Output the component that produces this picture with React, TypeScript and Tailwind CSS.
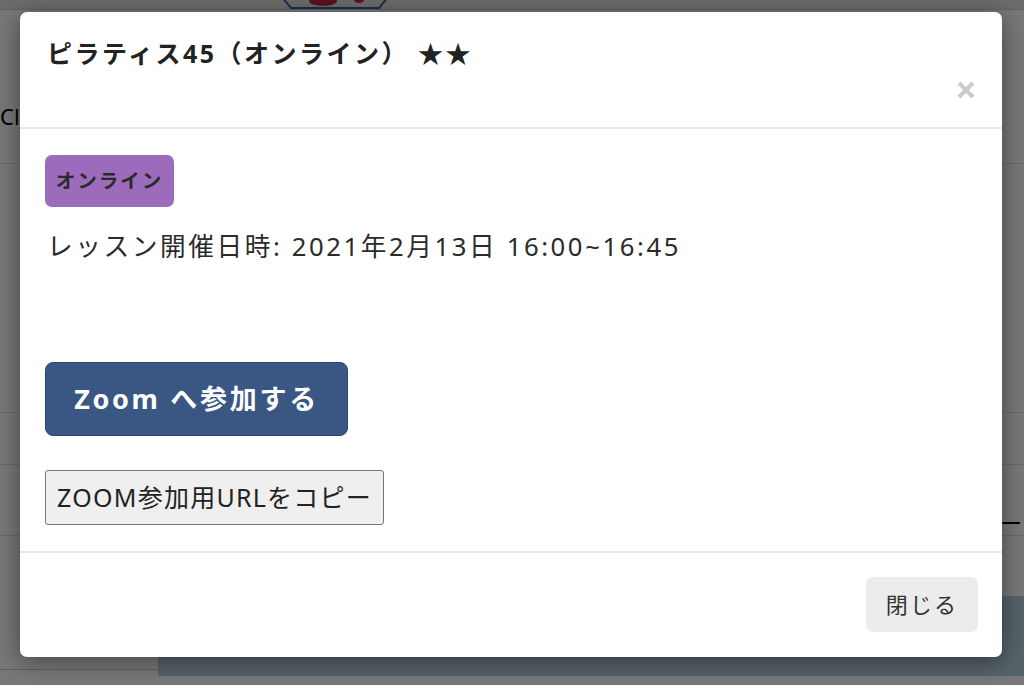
import React from "react";

function CloseIcon() {
    return (
        <svg width="20" height="20" viewBox="0 0 20 20" fill="none" stroke="currentColor" strokeWidth="4" strokeLinecap="butt">
            <path d="M3 3 L17 17 M17 3 L3 17" />
        </svg>
    );
}

/** Faint page that sits behind the dimmed overlay. */
function BackgroundPage() {
    return (
        <div className="h-full w-full bg-white flex flex-col">
            <div className="h-[10px] bg-[#e6e6e6] border-b border-[#d0d0d0] flex justify-center">
                <svg width="120" height="10" viewBox="0 0 120 10" className="ml-[-354px]">
                    <path d="M6 -4 L114 -4 L104 8 L16 8 Z" fill="none" stroke="#3b63b3" strokeWidth="2" />
                    <ellipse cx="48" cy="1" rx="14" ry="5" fill="#c0283c" />
                    <ellipse cx="84" cy="0" rx="5" ry="3" fill="#c0283c" />
                </svg>
            </div>
            <div className="h-[95px]" />
            <div className="text-[22px] leading-none text-black pl-0">Cl</div>
            <div className="mt-[36px] border-b border-[#e0e0e0]" />
            <div className="h-[248px]" />
            <div className="border-b border-[#e0e0e0]" />
            <div className="h-[51px]" />
            <div className="border-b border-[#e0e0e0]" />
            <div className="h-[70px] flex justify-end items-start">
                <span className="text-[22px] leading-[30px] text-black mt-[42px] mr-[2px]">ン ー</span>
            </div>
            <div className="border-b border-[#e0e0e0]" />
            <div className="h-[60px]" />
            <div className="flex h-[80px]">
                <div className="w-[158px] border-b border-[#c8c8c8] h-[74px]" />
                <div className="flex-1 bg-[#b8d3e0]" />
            </div>
        </div>
    );
}

export default function App() {
    return (
        <div className="relative w-[1024px] h-[685px] overflow-hidden font-['Noto_Sans','Noto_Sans_CJK_JP',sans-serif]">
            <BackgroundPage />
            <div className="absolute inset-0 bg-black/[0.53]" />
            <div className="absolute inset-0 pt-[12px] pl-[20px]">
                <div className="w-[982px] h-[645px] bg-white rounded-[7px] shadow-[0_4px_24px_rgba(0,0,0,0.45)] flex flex-col">
                    <div className="h-[117px] border-b-2 border-[#e6e6e6] flex justify-between pl-[27px] pr-[26px] pt-[23px]">
                        <h2 className="text-[25px] leading-[36px] font-bold text-[#222] tracking-[0.1em]">
                            ピラティス45（オンライン） ★★
                        </h2>
                        <button className="text-[#c9c9c9] mt-[45px] h-[20px]">
                            <CloseIcon />
                        </button>
                    </div>
                    <div className="flex-1 px-[25px] pt-[26px] flex flex-col items-start">
                        <span className="h-[52px] w-[129px] rounded-[7px] bg-[#9c6bbc] text-[#2a2a2a] text-[19.5px] font-bold tracking-[0.1em] flex items-center justify-center">
                            オンライン
                        </span>
                        <p className="mt-[22px] ml-[2px] text-[25.7px] leading-[36px] text-[#2b2b2b] tracking-[0.1em]">
                            レッスン開催日時: 2021年2月13日 16:00~16:45
                        </p>
                        <button className="mt-[97px] w-[303px] h-[74px] rounded-[8px] bg-[#3a5784] border border-[#2d4670] text-white text-[27px] font-bold tracking-[0.1em] flex items-center justify-center">
                            Zoom へ参加する
                        </button>
                        <button className="mt-[34px] w-[339px] h-[55px] rounded-[3px] bg-[#efefef] border border-[#767676] text-[#222] text-[25px] tracking-[0.05em] flex items-center justify-center">
                            ZOOM参加用URLをコピー
                        </button>
                    </div>
                    <div className="h-[106px] border-t-2 border-[#e6e6e6] flex justify-end items-start pt-[24px] pr-[24px]">
                        <button className="w-[112px] h-[55px] rounded-[7px] bg-[#ececec] text-[#333] text-[22px] tracking-[0.1em] flex items-center justify-center">
                            閉じる
                        </button>
                    </div>
                </div>
            </div>
        </div>
    );
}
